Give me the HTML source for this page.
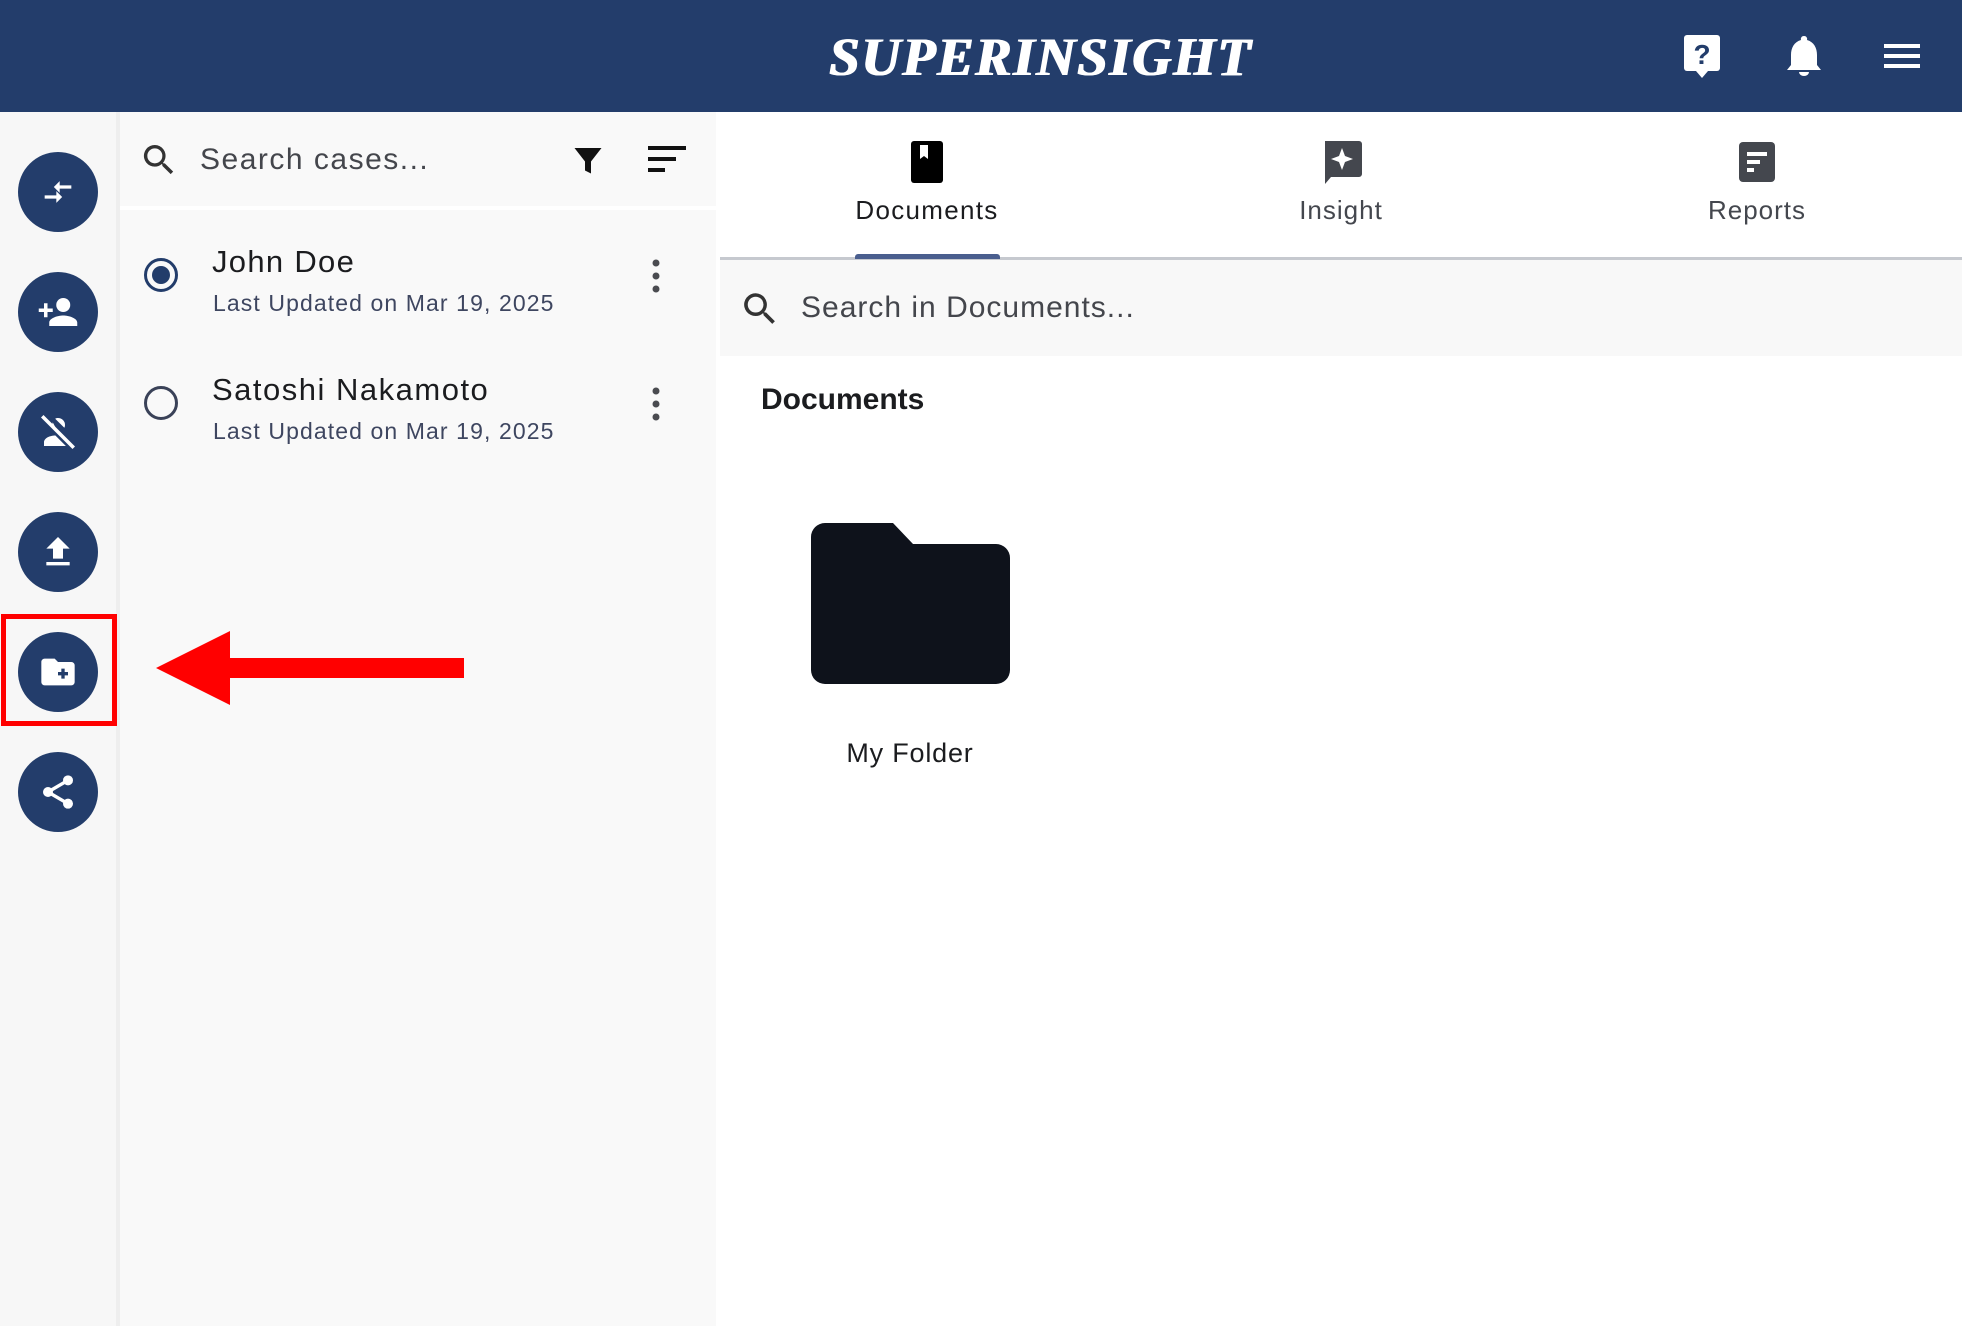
<!DOCTYPE html>
<html><head><meta charset="utf-8"><style>
*{margin:0;padding:0;box-sizing:border-box}
body{width:1962px;height:1326px;position:relative;overflow:hidden;background:#fff;font-family:"Liberation Sans",Roboto,sans-serif;color:#1b1c1f}
.abs{position:absolute}
.hdr{left:0;top:0;width:1962px;height:112px;background:#233d6b}
.logo{left:0;width:2082px;top:26px;text-align:center;font-family:"Liberation Serif",serif;font-weight:bold;font-style:italic;font-size:54px;color:#fff;letter-spacing:2px;text-shadow:1px 0 0 #fff,-1px 0 0 #fff}
.side{left:0;top:112px;width:116px;height:1214px;background:#f7f7f7}
.circ{left:18px;width:80px;height:80px;border-radius:50%;background:#233d6b;display:flex;align-items:center;justify-content:center}
.cases{left:120px;top:112px;width:596px;height:1214px;background:#f9f9f9}
.txt{white-space:nowrap}
</style></head><body>
<div class="abs hdr"></div>
<div class="abs logo">SUPERINSIGHT</div>
<svg class="abs" style="left:1683px;top:34px" width="40" height="46" viewBox="0 0 40 46"><rect x="1" y="1" width="36" height="36" rx="3" fill="#fff"/><path d="M13 37 L19 44 L25 37Z" fill="#fff"/><text x="19" y="30" font-family="Liberation Sans" font-weight="bold" font-size="28" text-anchor="middle" fill="#233d6b">?</text></svg>
<svg class="abs" style="left:1784px;top:34px" width="40" height="46" viewBox="0 0 40 46"><path d="M20 2 a3 3 0 0 1 3 4 c7 2 10 8 10 15 v10 l4 5 H3 l4-5 V21 c0-7 3-13 10-15 a3 3 0 0 1 3-4Z" fill="#fff"/><path d="M15 38 h10 a5 4 0 0 1-10 0Z" fill="#fff"/></svg>
<svg class="abs" style="left:1884px;top:42px" width="38" height="28"><rect y="2" width="36" height="4" fill="#fff"/><rect y="12" width="36" height="4" fill="#fff"/><rect y="22" width="36" height="4" fill="#fff"/></svg>

<div class="abs side"></div>
<div class="abs" style="left:116px;top:112px;width:4px;height:1214px;background:#eeeeee"></div>
<div class="abs circ" style="top:152px"><svg width="40" height="40" viewBox="0 0 24 24" fill="#fff"><path d="M13 8h7v2h-7v2.5L9.5 9 13 5.5z M11 14H4v2h7v2.5l3.5-3.5L11 11.5z"/></svg></div>
<div class="abs circ" style="top:272px"><svg width="42" height="42" viewBox="0 0 24 24" fill="#fff"><circle cx="15" cy="8" r="4"/><path d="M15 14c-3 0-8 1.5-8 4v2h16v-2c0-2.5-5-4-8-4z M6 10V7H4v3H1v2h3v3h2v-3h3v-2z"/></svg></div>
<div class="abs circ" style="top:392px"><svg width="42" height="42" viewBox="0 0 24 24" fill="#fff"><path d="M12 4a4 4 0 0 1 4 4c0 .6-.1 1.1-.4 1.6L10.4 4.4C10.9 4.1 11.4 4 12 4z M4 18c0-2.6 3.5-4 6.5-4l6 6H4z"/><path d="M3 3l18 18" stroke="#fff" stroke-width="2"/><path d="M9 6.5 A4 4 0 0 0 12 12" fill="#fff"/></svg></div>
<div class="abs circ" style="top:512px"><svg width="40" height="40" viewBox="0 0 24 24" fill="#fff"><path d="M9 16h6v-6h4l-7-7-7 7h4z M5 18h14v2H5z"/></svg></div>
<div class="abs circ" style="top:632px"><svg width="40" height="40" viewBox="0 0 24 24" fill="#fff"><path d="M20 6h-8l-2-2H4c-1.1 0-2 .9-2 2v12c0 1.1.9 2 2 2h16c1.1 0 2-.9 2-2V8c0-1.1-.9-2-2-2z"/><path d="M15 10v6 M12 13h6" stroke="#233d6b" stroke-width="2"/></svg></div>
<div class="abs circ" style="top:752px"><svg width="40" height="40" viewBox="0 0 24 24" fill="#fff"><circle cx="18" cy="5" r="3"/><circle cx="6" cy="12" r="3"/><circle cx="18" cy="19" r="3"/><path d="M6 12L18 5M6 12l12 7" stroke="#fff" stroke-width="2"/></svg></div>
<div class="abs" style="left:1px;top:614px;width:116px;height:112px;border:5px solid #ff0000"></div>

<div class="abs cases"></div>
<div class="abs" style="left:120px;top:206px;width:596px;height:4px;background:#fff"></div>
<svg class="abs" style="left:139px;top:140px" width="40" height="40" viewBox="0 0 24 24" fill="#333"><path d="M15.5 14h-.8l-.3-.3A6.5 6.5 0 1 0 9.5 16a6.5 6.5 0 0 0 4.2-1.6l.3.3v.8l5 5 1.5-1.5-5-5zm-6 0A4.5 4.5 0 1 1 14 9.5 4.5 4.5 0 0 1 9.5 14z"/></svg>
<div class="abs txt" style="left:200px;top:143px;font-size:30px;color:#44464c;letter-spacing:1.5px">Search cases...</div>
<svg class="abs" style="left:570px;top:142px" width="36" height="36" viewBox="0 0 24 24" fill="#111"><path d="M3 4h18l-7 9v8l-4-2v-6z"/></svg>
<svg class="abs" style="left:648px;top:145px" width="40" height="30"><rect y="1" width="38" height="4" fill="#111"/><rect y="12" width="28" height="4" fill="#111"/><rect y="23" width="17" height="4" fill="#111"/></svg>

<div class="abs" style="left:144px;top:258px;width:34px;height:34px;border:3px solid #233d6b;border-radius:50%"></div>
<div class="abs" style="left:152px;top:266px;width:18px;height:18px;background:#233d6b;border-radius:50%"></div>
<div class="abs txt" style="left:212px;top:244px;font-size:31px;color:#1b1c1f;letter-spacing:1.3px">John Doe</div>
<div class="abs txt" style="left:213px;top:290px;font-size:23px;color:#3e4660;letter-spacing:1.1px">Last Updated on Mar 19, 2025</div>
<svg class="abs" style="left:650px;top:258px" width="12" height="36"><circle cx="6" cy="5" r="3.5" fill="#4a4b50"/><circle cx="6" cy="18" r="3.5" fill="#4a4b50"/><circle cx="6" cy="31" r="3.5" fill="#4a4b50"/></svg>

<div class="abs" style="left:144px;top:386px;width:34px;height:34px;border:3px solid #3a4258;border-radius:50%"></div>
<div class="abs txt" style="left:212px;top:372px;font-size:31px;color:#1b1c1f;letter-spacing:1.5px">Satoshi Nakamoto</div>
<div class="abs txt" style="left:213px;top:418px;font-size:23px;color:#3e4660;letter-spacing:1.1px">Last Updated on Mar 19, 2025</div>
<svg class="abs" style="left:650px;top:386px" width="12" height="36"><circle cx="6" cy="5" r="3.5" fill="#4a4b50"/><circle cx="6" cy="18" r="3.5" fill="#4a4b50"/><circle cx="6" cy="31" r="3.5" fill="#4a4b50"/></svg>

<!-- tabs -->
<svg class="abs" style="left:909px;top:141px" width="36" height="42" viewBox="0 0 36 42"><rect x="2" y="0" width="32" height="42" rx="3" fill="#000"/><path d="M11 4v14l4-3 4 3V4z" fill="#fff"/></svg>
<div class="abs txt" style="left:827px;top:195px;width:200px;text-align:center;font-size:26px;color:#1b1c1f;letter-spacing:1.3px">Documents</div>
<svg class="abs" style="left:1321px;top:141px" width="42" height="44" viewBox="0 0 42 44"><path d="M4 0h34a3 3 0 0 1 3 3v30a3 3 0 0 1-3 3H10l-6 7z" fill="#44474e"/><path d="M21 7l3 8 8 3-8 3-3 8-3-8-8-3 8-3z" fill="#fff"/></svg>
<div class="abs txt" style="left:1241px;top:195px;width:200px;text-align:center;font-size:26px;color:#44474e;letter-spacing:1px">Insight</div>
<svg class="abs" style="left:1738px;top:142px" width="38" height="40" viewBox="0 0 38 40"><rect x="1" y="0" width="36" height="40" rx="4" fill="#44474e"/><rect x="9" y="10" width="20" height="4" fill="#fff"/><rect x="9" y="18" width="13" height="4" fill="#fff"/><rect x="9" y="26" width="7" height="4" fill="#fff"/></svg>
<div class="abs txt" style="left:1657px;top:195px;width:200px;text-align:center;font-size:26px;color:#44474e;letter-spacing:1px">Reports</div>
<div class="abs" style="left:720px;top:257px;width:1242px;height:3px;background:#c6c9cf"></div>
<div class="abs" style="left:855px;top:254px;width:145px;height:5px;background:#4a5e8e;border-radius:3px 3px 0 0"></div>

<div class="abs" style="left:720px;top:260px;width:1242px;height:96px;background:#f8f8f8"></div>
<svg class="abs" style="left:739px;top:288px" width="42" height="42" viewBox="0 0 24 24" fill="#333"><path d="M15.5 14h-.8l-.3-.3A6.5 6.5 0 1 0 9.5 16a6.5 6.5 0 0 0 4.2-1.6l.3.3v.8l5 5 1.5-1.5-5-5zm-6 0A4.5 4.5 0 1 1 14 9.5 4.5 4.5 0 0 1 9.5 14z"/></svg>
<div class="abs txt" style="left:801px;top:291px;font-size:30px;color:#44464c;letter-spacing:1px">Search in Documents...</div>

<div class="abs txt" style="left:761px;top:383px;font-size:30px;font-weight:bold;color:#1b1c1f">Documents</div>
<svg class="abs" style="left:811px;top:523px" width="199" height="161" viewBox="0 0 199 161"><path d="M14 0h68l20 21h83a14 14 0 0 1 14 14v112a14 14 0 0 1-14 14H14A14 14 0 0 1 0 147V14A14 14 0 0 1 14 0z" fill="#0e121b"/></svg>
<div class="abs txt" style="left:810px;top:738px;width:200px;text-align:center;font-size:27px;color:#1b1c1f;letter-spacing:0.8px">My Folder</div>

<svg class="abs" style="left:150px;top:625px" width="320" height="90"><polygon points="6,43 80,6 80,33 314,33 314,53 80,53 80,80" fill="#ff0000"/></svg>
</body></html>
